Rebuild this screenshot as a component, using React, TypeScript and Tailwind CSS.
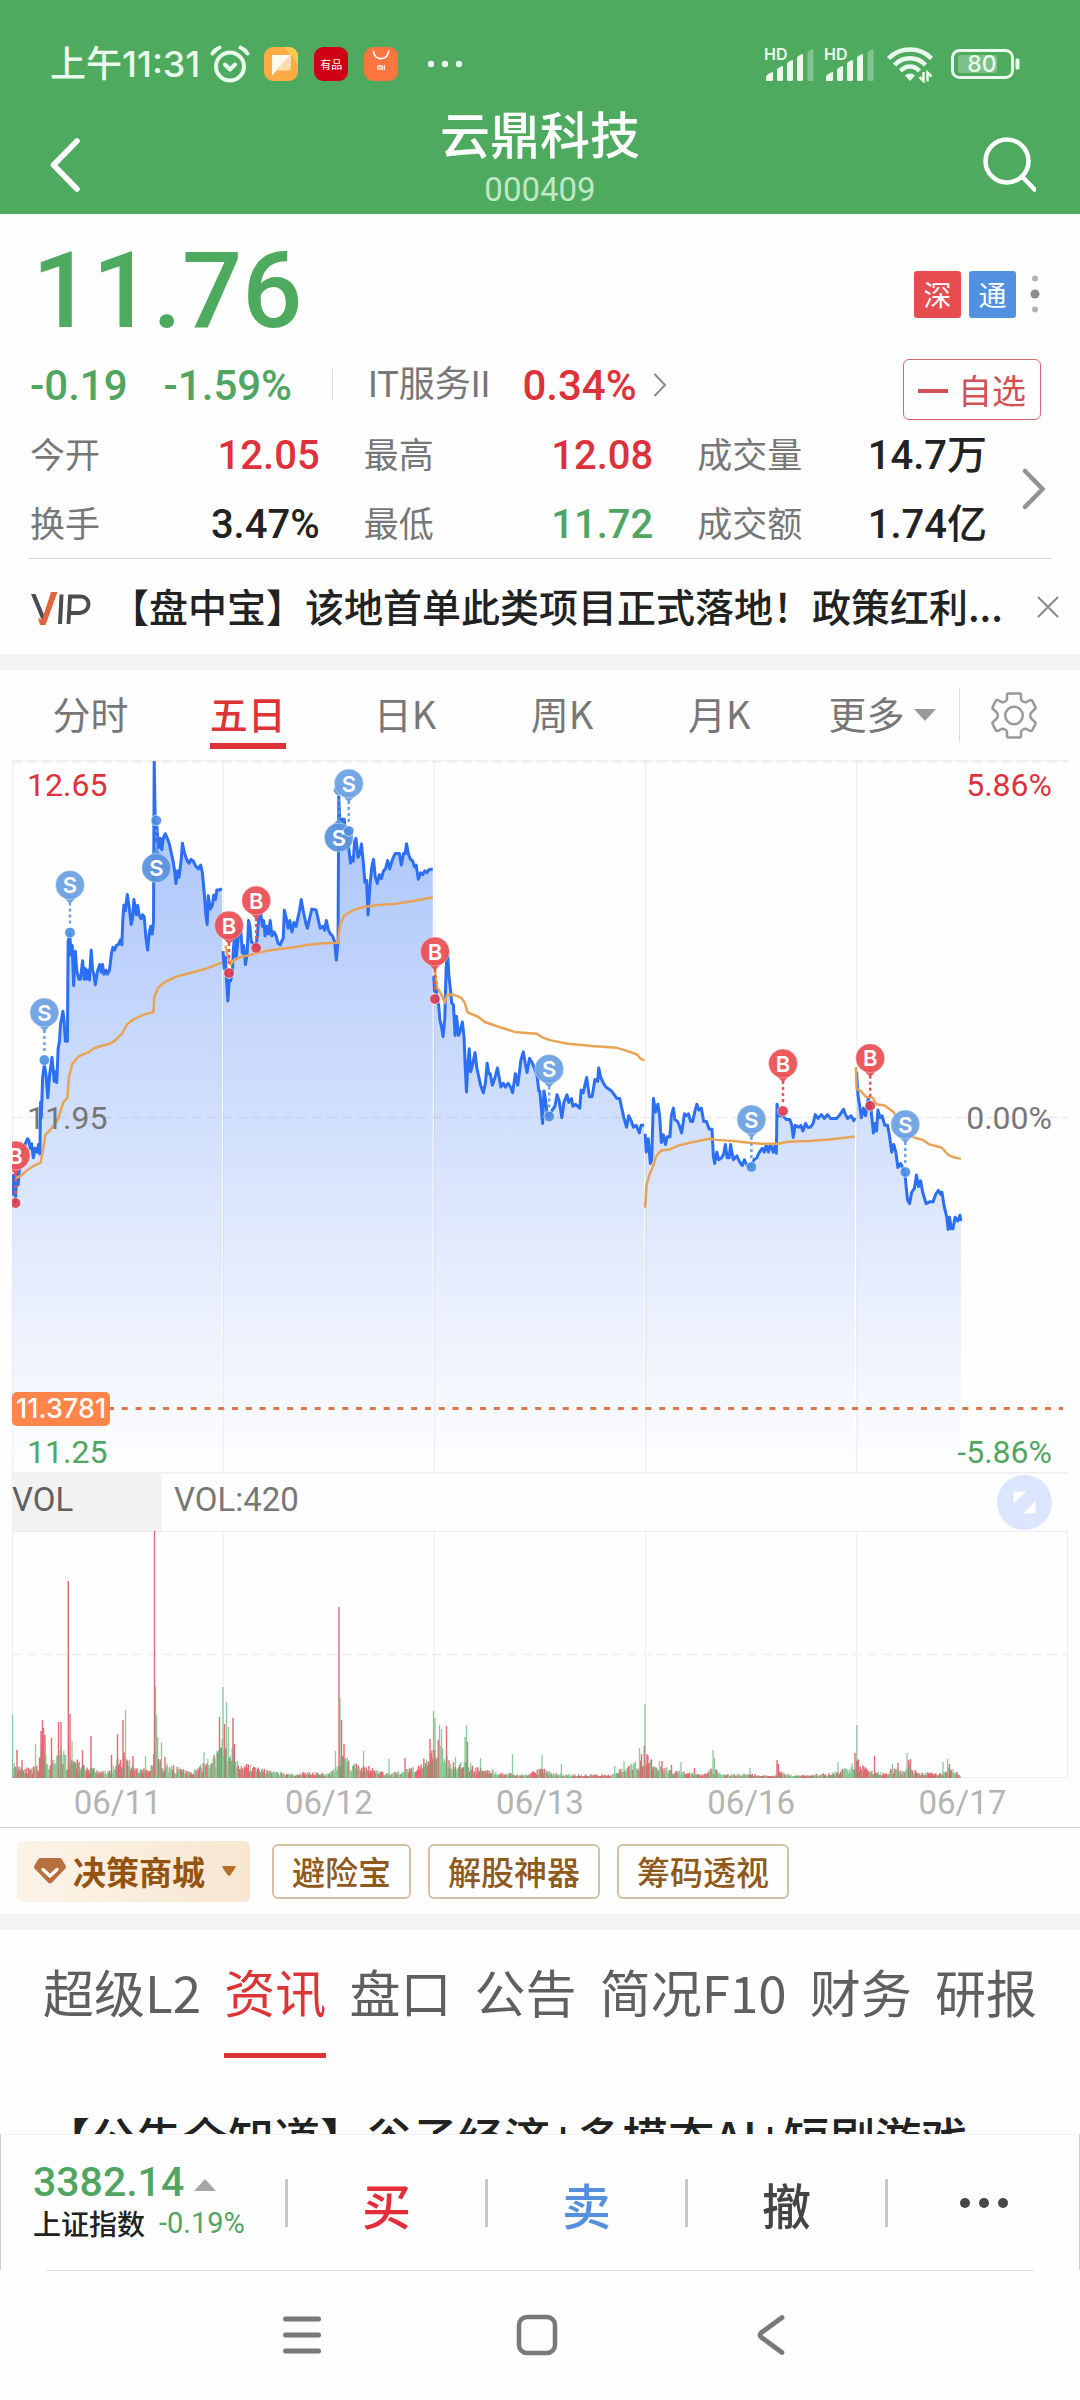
import { useId, useState } from 'react';
import clsx from 'clsx';

type Side = 'B' | 'S';

interface Pin {
  side: Side;
  x: number;
  y: number;
  below?: boolean;
}

interface Session {
  date: string;
  price: string;
  average: string;
}

const NUM = "font-['Roboto','Noto_Sans_CJK_SC',sans-serif]";

const CHART_W = 1056;
const PRICE_H = 713;
const VOLUME_H = 247;
const DAY_W = CHART_W / 5;

const PERIODS = ['分时', '五日', '日K', '周K', '月K'];
const SECTIONS = ['超级L2', '资讯', '盘口', '公告', '简况F10', '财务', '研报'];
const TOOLS = ['避险宝', '解股神器', '筹码透视'];

const STATS = [
  { label: '今开', value: '12.05', tone: 'text-[#dd323c]' },
  { label: '最高', value: '12.08', tone: 'text-[#dd323c]' },
  { label: '成交量', value: '14.7万', tone: 'text-[#222222]' },
  { label: '换手', value: '3.47%', tone: 'text-[#222222]' },
  { label: '最低', value: '11.72', tone: 'text-[#51a562]' },
  { label: '成交额', value: '1.74亿', tone: 'text-[#222222]' },
];

// Raw tick coordinates, mapped onto the chart by the plot group's transform
const SESSIONS: Session[] = [
  {
    date: '06/11',
    price:
      '36,1368 38,1420 42,1370 45,1440 49,1360 53,1395 56,1360 60,1330 68,1300 80,1275 84,1280 88,1300 92,1288 97,1325 102,1300 108,1310 112,1290 116,1315 118,1180 120,1220 124,1115 129,1080 134,1110 139,1168 144,1110 151,1062 154,1090 158,1125 161,1100 165,1128 169,1040 173,1020 176,975 183,942 186,965 190,1020 196,1020 198,760 203,740 206,795 210,770 214,875 219,785 223,835 229,858 234,858 240,810 245,858 248,830 252,858 256,835 260,860 265,782 269,835 273,845 277,873 284,835 290,820 294,840 298,820 302,845 308,835 312,845 318,835 324,790 328,775 333,782 338,770 344,768 350,755 354,768 357,700 360,665 364,680 370,637 376,675 381,715 385,700 389,650 396,690 400,665 404,690 410,700 414,690 419,695 424,750 429,782 434,735 438,720 442,740 446,710 448,290 452,500 456,460 460,515 465,490 470,520 474,490 480,478 486,490 492,505 498,530 503,550 508,580 511,608 516,575 520,592 526,550 530,503 535,525 540,540 545,550 549,555 555,545 562,550 568,562 576,570 583,560 588,580 594,640 598,690 602,715 605,640 611,675 617,665 621,638 626,650 630,625 636,625 645,622',
    average:
      '45,1378 60,1372 78,1358 100,1345 118,1338 124,1310 132,1265 150,1248 168,1225 184,1180 196,1168 200,1115 210,1080 228,1060 260,1048 270,1040 295,1032 320,1027 335,1018 355,1000 370,975 390,962 420,950 446,944 448,905 460,880 480,865 510,852 560,840 600,830 645,815',
  },
  {
    date: '06/12',
    price:
      '648,785 651,830 655,800 658,860 662,915 666,860 670,862 675,840 678,780 682,735 686,800 690,770 694,730 700,735 704,790 708,770 713,820 718,790 722,705 726,720 730,760 736,765 744,770 748,740 752,690 757,680 762,720 766,705 770,745 775,720 780,740 785,705 790,745 796,735 802,745 808,765 814,768 823,750 826,678 832,700 837,725 842,705 848,735 854,710 860,720 866,695 870,680 875,650 881,680 888,710 893,725 899,700 906,675 918,677 924,700 930,725 938,720 943,730 948,705 954,730 960,740 966,745 972,760 977,808 982,760 984,380 988,470 992,440 1000,440 1004,480 1010,490 1018,555 1022,540 1026,550 1030,500 1034,490 1040,540 1045,530 1050,505 1055,550 1060,605 1065,600 1069,690 1075,610 1080,565 1085,545 1090,590 1096,608 1102,585 1108,595 1114,575 1120,570 1126,548 1132,570 1140,545 1148,530 1154,530 1160,530 1166,560 1172,530 1177,530 1181,504 1186,530 1192,545 1198,548 1204,565 1209,560 1215,597 1222,580 1228,585 1234,575 1240,580 1246,572 1257,570',
    average:
      '655,770 662,800 670,820 680,808 700,800 740,792 780,783 830,777 860,774 890,769 940,764 982,763 988,715 1000,692 1025,678 1060,669 1100,664 1150,661 1200,654 1257,644',
  },
  {
    date: '06/13',
    price:
      '1260,850 1262,890 1265,860 1270,910 1274,925 1278,965 1283,985 1287,1008 1292,960 1296,830 1300,785 1304,850 1308,880 1312,920 1317,925 1322,1005 1326,955 1332,1005 1338,990 1343,970 1348,1010 1351,1080 1355,1153 1359,1080 1363,1040 1367,1100 1373,1080 1380,1050 1385,1090 1390,1110 1396,1135 1404,1155 1410,1130 1415,1078 1420,1105 1424,1105 1430,1135 1438,1115 1445,1090 1450,1115 1455,1140 1462,1130 1468,1140 1476,1130 1483,1140 1489,1155 1497,1105 1504,1135 1509,1100 1513,1070 1520,1048 1526,1080 1531,1102 1538,1065 1545,1075 1552,1090 1560,1110 1565,1150 1568,1150 1576,1235 1580,1150 1584,1170 1590,1215 1596,1216 1604,1200 1612,1190 1618,1160 1624,1175 1632,1220 1638,1180 1647,1160 1652,1180 1660,1170 1664,1190 1672,1185 1684,1195 1688,1148 1694,1155 1704,1115 1712,1165 1720,1165 1728,1120 1736,1125 1739,1090 1745,1115 1753,1130 1760,1140 1768,1145 1776,1150 1784,1160 1792,1170 1800,1170 1806,1195 1812,1220 1820,1245 1826,1215 1832,1225 1840,1245 1848,1240 1857,1260 1862,1240 1871,1240',
    average:
      '1263,835 1270,880 1283,900 1292,920 1298,900 1315,898 1340,907 1350,920 1358,945 1390,957 1408,970 1450,983 1500,997 1560,1001 1575,1010 1600,1018 1650,1027 1720,1033 1790,1037 1830,1048 1850,1055 1862,1067 1872,1070',
  },
  {
    date: '06/16',
    price:
      '1874,1262 1877,1310 1883,1275 1889,1340 1893,1330 1898,1170 1904,1205 1911,1185 1916,1215 1921,1285 1927,1265 1933,1290 1938,1270 1946,1270 1950,1215 1956,1195 1960,1225 1968,1230 1973,1240 1980,1260 1988,1210 1994,1215 2000,1210 2006,1230 2012,1230 2018,1205 2024,1185 2030,1200 2037,1195 2044,1230 2052,1230 2060,1250 2068,1250 2072,1320 2076,1340 2082,1310 2088,1330 2096,1325 2102,1315 2107,1290 2112,1325 2118,1325 2122,1290 2130,1330 2140,1320 2148,1335 2156,1345 2162,1330 2170,1345 2182,1348 2190,1330 2198,1325 2206,1310 2214,1300 2220,1310 2226,1290 2232,1310 2238,1290 2246,1310 2252,1290 2255,1313 2257,1185 2262,1215 2274,1215 2284,1225 2294,1225 2300,1240 2304,1272 2310,1240 2320,1245 2326,1240 2332,1255 2340,1235 2346,1245 2354,1245 2362,1235 2368,1212 2376,1222 2386,1212 2394,1222 2404,1212 2412,1222 2422,1222 2430,1222 2440,1212 2450,1198 2456,1212 2462,1222 2472,1215 2480,1228 2483,1220',
    average:
      '1874,1455 1878,1395 1888,1365 1898,1345 1905,1322 1920,1306 1945,1303 1970,1293 2010,1284 2060,1275 2080,1278 2130,1281 2170,1285 2210,1288 2260,1288 2290,1283 2350,1281 2410,1277 2483,1269',
  },
  {
    date: '06/17',
    price:
      '2488,1100 2492,1160 2498,1195 2502,1220 2508,1195 2514,1215 2522,1170 2530,1200 2537,1260 2542,1235 2546,1255 2550,1200 2556,1220 2562,1215 2570,1240 2578,1240 2584,1270 2590,1310 2596,1290 2602,1310 2608,1350 2616,1340 2628,1362 2632,1400 2636,1435 2642,1445 2648,1415 2656,1405 2662,1370 2668,1400 2674,1385 2680,1415 2690,1445 2700,1440 2710,1440 2718,1420 2726,1410 2732,1420 2736,1415 2742,1450 2750,1480 2754,1512 2758,1480 2763,1510 2768,1510 2774,1480 2782,1490 2788,1475 2791,1490',
    average:
      '2486,1088 2488,1145 2500,1150 2515,1165 2535,1168 2545,1185 2570,1188 2595,1205 2610,1225 2640,1258 2655,1272 2680,1278 2700,1290 2735,1298 2755,1318 2775,1325 2791,1327',
  },
];

const PINS: Pin[] = [
  { side: 'B', x: 3.5, y: 442 },
  { side: 'S', x: 32.4, y: 299 },
  { side: 'S', x: 58, y: 171.5 },
  { side: 'S', x: 144.3, y: 59.5, below: true },
  { side: 'B', x: 217, y: 212 },
  { side: 'B', x: 244.2, y: 187 },
  { side: 'S', x: 326.8, y: 29, below: true },
  { side: 'S', x: 336.8, y: 70 },
  { side: 'B', x: 422.9, y: 238 },
  { side: 'S', x: 537.2, y: 355.4 },
  { side: 'S', x: 739.4, y: 406 },
  { side: 'B', x: 771, y: 350 },
  { side: 'B', x: 858.2, y: 344.7 },
  { side: 'S', x: 893.3, y: 411 },
];

// [x, height] outline of the ordinary turnover
const VOLUME_ENVELOPE: [number, number][] = [
  [0, 18], [8, 16], [18, 10], [26, 14], [30, 36], [38, 18], [44, 22], [50, 36], [56, 20], [62, 26], [70, 16],
  [90, 8], [97, 8], [105, 20], [114, 30], [120, 16], [128, 12], [138, 10], [143, 40], [150, 18], [165, 12],
  [180, 7], [195, 20], [204, 28], [211, 46], [218, 36], [226, 20], [240, 14], [260, 8], [285, 4], [295, 8],
  [315, 5], [325, 15], [332, 30], [340, 18], [360, 12], [375, 5], [390, 8], [408, 18], [416, 30], [424, 44],
  [434, 28], [445, 14], [455, 22], [462, 12], [475, 12], [490, 6], [515, 4], [530, 12], [540, 6], [560, 4],
  [600, 4], [612, 14], [625, 18], [633, 28], [645, 14], [660, 10], [690, 4], [701, 12], [710, 4], [740, 5],
  [760, 2], [768, 8], [780, 3], [800, 4], [820, 6], [835, 12], [846, 20], [855, 10], [870, 6], [885, 12],
  [890, 8], [897, 20], [905, 6], [930, 6], [937, 12], [949, 4],
];

// [x, height, up]
const VOLUME_SPIKES: [number, number, 0 | 1][] = [
  [0.5, 63, 0], [5, 28, 1], [10, 18, 1], [23.5, 34, 0], [29, 47, 1], [30.5, 58, 1], [31.5, 50, 1], [33, 43, 1],
  [39.5, 40, 1], [46.5, 56, 1], [49, 56, 1], [56.3, 197, 1], [58, 64, 1], [60, 37, 0], [70.5, 28, 1],
  [79, 42, 1], [99.5, 23, 1], [105.5, 44, 1], [111, 58, 1], [113.5, 68, 0], [121, 22, 1], [133.5, 22, 0],
  [142.5, 247, 1], [143.5, 92, 0], [144.5, 63, 0], [145.7, 41, 0], [149.5, 36, 0], [153, 21, 1], [192, 26, 0],
  [207.5, 61, 1], [211, 91, 0], [212.5, 54, 1], [214.5, 76, 0], [216.5, 51, 0], [221, 60, 1], [222.5, 34, 1],
  [323.5, 27, 0], [327, 171, 1], [328, 80, 0], [329.5, 58, 1], [332, 34, 1], [351.5, 27, 0], [377, 19, 0],
  [393, 20, 1], [418, 39, 1], [421.5, 67, 0], [423, 60, 0], [427.5, 53, 0], [429.5, 49, 0], [434.5, 52, 1],
  [443.5, 21, 0], [453, 41, 0], [454.5, 53, 0], [455.5, 36, 1], [468.5, 20, 0], [500.5, 24, 0], [530, 23, 0],
  [549.4, 14, 0], [602.7, 12, 0], [612, 17, 0], [627.5, 30, 0], [629.5, 24, 1], [632.3, 32, 1], [633, 74, 0],
  [635, 22, 1], [647.5, 17, 0], [650, 17, 1], [659.5, 13, 1], [669, 16, 0], [682.5, 10, 1], [701, 28, 0],
  [702.5, 20, 0], [738, 10, 0], [765, 18, 1], [766.5, 14, 1], [826, 16, 0], [843, 25, 1], [844.8, 53, 0],
  [846, 18, 1], [862.5, 22, 1], [880.5, 14, 0], [886, 15, 1], [895, 25, 0], [896.5, 18, 1], [898.5, 19, 1],
  [931, 16, 0], [935.5, 19, 0], [937.5, 14, 1],
];

function buildVolume() {
  const bars = { up: '', down: '' };
  const add = (x: number, h: number, up: boolean) => {
    bars[up ? 'up' : 'down'] += `M${x.toFixed(1)} ${VOLUME_H}v-${h.toFixed(1)}`;
  };

  let seed = 11;
  const rand = () => {
    seed = (seed * 16807) % 2147483647;
    return seed / 2147483647;
  };

  let i = 0;
  for (let x = 0.5; x < 949; x += 0.9) {
    while (i < VOLUME_ENVELOPE.length - 2 && VOLUME_ENVELOPE[i + 1][0] < x) i++;
    const [x0, h0] = VOLUME_ENVELOPE[i];
    const [x1, h1] = VOLUME_ENVELOPE[i + 1];
    const top = h0 + ((h1 - h0) * (x - x0)) / (x1 - x0);
    const trend = Math.sin(x / 9) * 0.25;
    add(x, Math.max(2, top * (0.35 + rand() * 0.6)), rand() + trend > 0.5);
  }
  VOLUME_SPIKES.forEach(([x, h, up]) => add(x, h, up === 1));
  return bars;
}

const VOLUME = buildVolume();

function areaPath(points: string) {
  const pairs = points.split(' ');
  const first = pairs[0].split(',')[0];
  const last = pairs[pairs.length - 1].split(',')[0];
  return `M${first},2151 L${points} L${last},2151 Z`;
}

function SignalIcon() {
  return (
    <div className="relative h-9 w-[51px]">
      <span className="absolute top-0 left-0 font-['Inter',sans-serif] text-[16px] leading-[16px] font-semibold">HD</span>
      <svg viewBox="0 0 51 36" className="h-9 w-[51px]" fill="currentColor" aria-hidden="true">
        <path d="M2 34.500V30.500Q3.500 27 9 26V33.500Q9 35 7.500 35H3Q2 35 2 34.500Z" />
        <path d="M13 23.500Q14.500 21 19 20V33.500Q19 35 17.500 35H14.500Q13 35 13 33.500Z" />
        <path d="M23 17.500Q24.500 15 29 14V33.500Q29 35 27.500 35H24.500Q23 35 23 33.500Z" />
        <path d="M33 11.500Q34.500 9 39 8V33.500Q39 35 37.500 35H34.500Q33 35 33 33.500Z" />
        <path opacity="0.35" d="M43.500 6.500Q45 4 49.500 3V33.500Q49.500 35 48 35H45Q43.500 35 43.500 33.500Z" />
      </svg>
    </div>
  );
}

function StatusBar() {
  return (
    <div className="flex h-10 items-center justify-between pr-[59px] pl-[50px] text-[#e9faec]">
      <div className="flex items-center">
        <span className="font-['Inter','Noto_Sans_CJK_SC',sans-serif] text-[36px] leading-10 font-medium">上午11:31</span>
        <svg viewBox="0 0 40 38" className="ml-2.5 h-[38px] w-10" fill="none" stroke="currentColor" strokeWidth="4" strokeLinecap="round" strokeLinejoin="round" aria-hidden="true">
          <circle cx="20" cy="21.500" r="14" />
          <path d="M2.500 8.500Q5 4.500 9.500 2.500M37.500 8.500Q35 4.500 30.500 2.500M15 19.500l5 5 5-5" />
        </svg>
        <svg viewBox="0 0 34 34" className="ml-3.5 size-[34px]" aria-hidden="true">
          <rect width="34" height="34" rx="9" fill="#ffab45" />
          <path d="M20 0h5a9 9 0 0 1 9 9v8z" fill="#fbc850" />
          <path d="M27 8v12.500q0 3-3 3H13L27 8.500z" fill="#ffdcae" />
          <path d="M8 8h19L8 28.500z" fill="#fff8ec" />
        </svg>
        <span className="ml-4 flex size-[34px] items-center justify-center rounded-[9px] bg-[#cf0014] text-[11px] leading-none text-white">有品</span>
        <svg viewBox="0 0 34 34" className="ml-4 size-[34px]" aria-hidden="true">
          <rect width="34" height="34" rx="9" fill="#ff7540" />
          <path d="M9.500 4.500c1 9.500 14 9.500 15 0" fill="none" stroke="#fff" strokeWidth="1.800" strokeLinecap="round" />
          <path d="M14 23v-4.200h3.200q1 0 1 1V23M16 20.500V23M20.300 18.300V23" fill="none" stroke="#fff" strokeWidth="1.200" />
        </svg>
        <svg viewBox="0 0 36 8" className="ml-[29px] h-2 w-9" fill="currentColor" aria-hidden="true">
          <circle cx="4" cy="4" r="3.200" />
          <circle cx="18" cy="4" r="3.200" />
          <circle cx="32" cy="4" r="3.200" />
        </svg>
      </div>
      <div className="flex items-center gap-[9px]">
        <SignalIcon />
        <SignalIcon />
        <svg viewBox="0 0 48 38" className="ml-0.5 h-[38px] w-12" fill="none" stroke="currentColor" strokeWidth="4.500" aria-hidden="true">
          <path d="M2.500 13.500C14 1.500 34 1.500 45.500 13.500M8.500 20C17 11 31 11 39.500 20M14.500 26C20 20 28 20 33.500 26" />
          <path d="M24 36l-5-5.500q5-4 10 0z" fill="currentColor" stroke="none" />
          <path d="M37.500 27v9l-4-4M41.500 36.500v-9l4 4" strokeWidth="2.500" />
        </svg>
        <svg viewBox="0 0 70 30" className="ml-2 h-[30px] w-[70px]" fill="none" aria-hidden="true">
          <rect x="1.500" y="1.500" width="60" height="27" rx="7" stroke="currentColor" strokeWidth="3" />
          <rect x="7" y="6" width="39" height="18" rx="3" fill="currentColor" opacity="0.3" />
          <rect x="64.500" y="9.500" width="4" height="11" rx="1.500" fill="currentColor" />
          <text x="31" y="23" textAnchor="middle" fill="currentColor" className="font-['Inter',sans-serif] text-[23px] font-medium">80</text>
        </svg>
      </div>
    </div>
  );
}

function Header() {
  return (
    <header className="bg-[#4eaa5e] pt-11 text-white">
      <StatusBar />
      <div className="flex items-end justify-between px-11 pt-5 pb-1.5">
        <button aria-label="返回" className="flex h-[86px] w-[54px] items-center pl-1.5">
          <svg viewBox="0 0 30 54" className="h-[54px] w-[30px]" fill="none" stroke="currentColor" strokeWidth="5.500" strokeLinecap="round" strokeLinejoin="round">
            <path d="M27 3L3.500 27 27 51" />
          </svg>
        </button>
        <div className="text-center">
          <h1 className="text-[50px] leading-14 font-medium">云鼎科技</h1>
          <p className={clsx(NUM, 'mt-3 text-[33px] leading-9 text-[#bfe8c5]')}>000409</p>
        </div>
        <button aria-label="搜索" className="flex h-[86px] w-[54px] items-center">
          <svg viewBox="0 0 54 56" className="h-14 w-[54px]" fill="none" stroke="currentColor" strokeWidth="4.500" strokeLinecap="round">
            <circle cx="25" cy="24" r="21.500" />
            <path d="M40 39.500L52.500 52.500" />
          </svg>
        </button>
      </div>
    </header>
  );
}

function Quote() {
  return (
    <section className="pt-6">
      <div className="flex items-center justify-between pr-10 pl-8">
        <p className={clsx(NUM, 'text-[106px] leading-none font-medium text-[#4eaa5e]')}>11.76</p>
        <div className="mt-1.5 flex items-center gap-2 text-[28px] leading-none text-white">
          <span className="flex size-[47px] items-center justify-center rounded-[3px] bg-[#e64c50]">深</span>
          <span className="flex size-[47px] items-center justify-center rounded-[3px] bg-[#5290e0]">通</span>
          <svg viewBox="0 0 10 38" className="ml-1.5 h-[38px] w-2.5" aria-hidden="true">
            <circle cx="5" cy="3.500" r="3" fill="#b3b3b3" />
            <circle cx="5" cy="19" r="4.500" fill="#8c8c8c" />
            <circle cx="5" cy="34.500" r="3" fill="#b3b3b3" />
          </svg>
        </div>
      </div>

      <div className="mt-[15px] flex items-start justify-between pr-[39px] pl-[30px]">
        <div className={clsx(NUM, 'flex h-[52px] items-center text-[42px] font-medium')}>
          <span className="text-[#51a562]">-0.19</span>
          <span className="ml-9 text-[#51a562]">-1.59%</span>
          <span className="ml-10 h-8 w-px bg-[#dddddd]" />
          <a href="#sector" className="ml-[35px] flex items-center text-[#dd323c]">
            <span className="text-[36px] font-normal text-[#777777]">IT服务II</span>
            <span className="ml-8">0.34%</span>
            <svg viewBox="0 0 14 24" className="ml-4 h-6 w-3.5" fill="none" stroke="#8a8a8a" strokeWidth="2">
              <path d="M1.500 1L12 12 1.500 23" />
            </svg>
          </a>
        </div>
        <button className="flex h-[61px] items-center gap-2.5 rounded-[6px] border border-[#d4686b] px-3.5 text-[34px] leading-none text-[#d25156]">
          <span className="mt-0.5 h-1 w-[30px] bg-current" />
          自选
        </button>
      </div>

      <div className="flex">
        <dl className="grid flex-1 grid-cols-3 gap-x-11 pl-[30px]">
          {STATS.map((stat) => (
            <div key={stat.label} className="flex h-[69px] items-center justify-between">
              <dt className="pb-1 text-[35px] leading-none text-[#777777]">{stat.label}</dt>
              <dd className={clsx(NUM, 'pt-0.5 text-[40px] leading-none font-medium', stat.tone)}>{stat.value}</dd>
            </div>
          ))}
        </dl>
        <button aria-label="更多行情" className="flex w-[93px] items-center justify-center">
          <svg viewBox="0 0 24 42" className="h-[42px] w-6" fill="none" stroke="#929292" strokeWidth="4.500" strokeLinecap="round">
            <path d="M3 3L20.500 21 3 39" />
          </svg>
        </button>
      </div>
      <div className="mx-7 h-px bg-[#d9d9d9]" />
    </section>
  );
}

function VipBanner() {
  return (
    <div className="flex h-[95px] items-center pr-[21px] pl-[30px]">
      <svg viewBox="0 0 62 34" className="mt-1 h-[34px] w-[62px] shrink-0" fill="none" role="img" aria-label="VIP">
        <path d="M1 2h4.500l9 22-2 6z" fill="#4c4c4c" />
        <path d="M21 0h6.500L15.500 33H10L8 26l4 2z" fill="#e2643c" />
        <path d="M31.500 2.500L30 32" stroke="#4c4c4c" strokeWidth="4" />
        <path d="M38.500 32L40 4.500h10c5 0 8.500 2.500 8.500 7.500S54.500 21 49 21h-9.500" stroke="#4c4c4c" strokeWidth="3.800" />
      </svg>
      <a href="#news" className="ml-[18px] min-w-0 flex-1 truncate pb-1 text-[39px] leading-14 font-medium text-[#222222]">
        【盘中宝】该地首单此类项目正式落地！政策红利...
      </a>
      <button aria-label="关闭" className="shrink-0">
        <svg viewBox="0 0 22 22" className="size-[22px]" stroke="#8a8a8a" strokeWidth="2">
          <path d="M1 1l20 20M21 1L1 21" />
        </svg>
      </button>
    </div>
  );
}

function PeriodTabs() {
  const [active, setActive] = useState('五日');

  return (
    <nav className="flex h-[90px] items-center px-3 text-[38px] leading-none text-[#777777]">
      {PERIODS.map((period) => (
        <button
          key={period}
          onClick={() => setActive(period)}
          className={clsx('flex h-full flex-1 items-center justify-center', period === active && 'font-medium text-[#df3437]')}
        >
          <span className="relative flex h-full items-center pb-1">
            {period}
            {period === active && <span className="absolute inset-x-0 bottom-[11px] h-1.5 bg-[#df3437]" />}
          </span>
        </button>
      ))}
      <button className="flex h-full flex-1 items-center justify-center">
        <span className="flex items-center gap-2.5 pb-1 pl-3">
          更多
          <svg viewBox="0 0 22 12" className="mt-1 h-3 w-5.5" fill="#9a9a9a">
            <path d="M0 0h22L11 12z" />
          </svg>
        </span>
      </button>
      <span className="ml-1 h-[54px] w-px bg-[#dddddd]" />
      <button aria-label="设置" className="flex h-full w-[108px] items-center justify-center">
        <svg viewBox="0 0 46 47" className="h-[47px] w-[46px]" fill="none" stroke="#999999" strokeWidth="2.500" strokeLinejoin="round">
          <path d="M17.500 1.500h11q1.500 0 1.500 1.500v4q0 1.500 2 2.500 2 1.200 3.500.5l3.500-1.800q1.500-.7 2.300.7l3 6q.7 1.300-.5 2.300l-3 2.800q-1.600 1.300-1.600 3.500t1.600 3.500l3 2.800q1.200 1 .5 2.300l-3 6q-.8 1.400-2.300.7L35.500 37q-1.500-.7-3.500.5-2 1-2 2.500v4q0 1.500-1.500 1.500h-11q-1.500 0-1.500-1.500v-4q0-1.500-2-2.500-2-1.200-3.500-.5L7 38.800q-1.500.7-2.300-.7l-3-6q-.7-1.300.5-2.300l3-2.800q1.600-1.300 1.600-3.500T5.200 20l-3-2.800q-1.200-1-.5-2.300l3-6q.8-1.400 2.300-.7l3.500 1.800q1.500.7 3.500-.5 2-1 2-2.500V3q0-1.500 1.500-1.500z" />
          <circle cx="23" cy="23.500" r="8.800" />
        </svg>
      </button>
    </nav>
  );
}

function TradePin({ side, x, y, below }: Pin) {
  const flip = below ? -1 : 1;
  const head = below ? '#5b93dd' : '#6fa2e4';
  const fill = side === 'B' ? '#ea5256' : head;
  const dot = side === 'B' ? '#dc3b4f' : '#4c8de0';

  return (
    <g transform={`translate(${x} ${y})`}>
      <path d={`M0 ${-30 * flip}V${-6 * flip}`} stroke={fill} strokeWidth="2.500" strokeDasharray="3 3" />
      <circle r="5.300" fill={dot} fillOpacity="0.9" stroke="#fff" strokeOpacity="0.6" />
      <path d={`M-8 ${-37 * flip}L0 ${-28.5 * flip}L8 ${-37 * flip}Z`} fill={fill} />
      <circle cy={-47.5 * flip} r="14.500" fill={fill} fillOpacity="0.95" stroke="#fff" strokeOpacity="0.4" />
      <text y={-47.5 * flip + 8} textAnchor="middle" fill="#fff" className="font-['Inter',sans-serif] text-[22px] font-semibold">
        {side}
      </text>
    </g>
  );
}

function GridColumns({ height }: { height: number }) {
  return (
    <g stroke="#888" strokeOpacity="0.1" strokeWidth="1.500">
      {[1, 2, 3, 4].map((day) => (
        <path key={day} d={`M${day * DAY_W} 0V${height}`} />
      ))}
    </g>
  );
}

function PriceChart() {
  const gradient = useId();

  return (
    <div className={clsx(NUM, 'relative border-t border-[#eeeeee] text-[32px] leading-8')}>
      <svg viewBox={`0 0 ${CHART_W} ${PRICE_H}`} className="block w-full" role="img" aria-label="五日走势">
        <defs>
          <linearGradient id={gradient} gradientUnits="userSpaceOnUse" x1="0" y1="288" x2="0" y2="2151">
            <stop offset="0" stopColor="#2b6cf6" stopOpacity="0.42" />
            <stop offset="1" stopColor="#2b6cf6" stopOpacity="0" />
          </linearGradient>
        </defs>
        <g transform="scale(0.3443 0.3827) translate(-35 -288)" fill="none" strokeLinejoin="round">
          {SESSIONS.map((session) => (
            <g key={session.date}>
              <path d={areaPath(session.price)} fill={`url(#${gradient})`} />
              <polyline points={session.price} stroke="#2c6ff2" strokeWidth="3" vectorEffect="non-scaling-stroke" />
              <polyline points={session.average} stroke="#e9a355" strokeWidth="2.500" vectorEffect="non-scaling-stroke" />
            </g>
          ))}
        </g>
        <GridColumns height={PRICE_H} />
        <path d={`M0 1H${CHART_W}M0 ${PRICE_H / 2}H${CHART_W}`} stroke="#888" strokeOpacity="0.15" strokeWidth="1.500" strokeDasharray="10 5" />
        <path d={`M0 ${PRICE_H - 1}H${CHART_W}`} stroke="#ececec" strokeWidth="1.500" />
        <path d="M0.500 0V713" stroke="#888" strokeOpacity="0.12" />
        <path d="M96 647.500H1051" stroke="#de7645" strokeWidth="3" strokeDasharray="6 7.780" />
        {PINS.map((pin) => (
          <TradePin key={`${pin.x}-${pin.y}`} {...pin} />
        ))}
      </svg>
      <span className="absolute top-2 left-[15px] text-[#dd323c]">12.65</span>
      <span className="absolute top-2 right-4 text-[#dd323c]">5.86%</span>
      <span className="absolute top-1/2 left-[15px] -translate-y-1/2 text-[#777777]">11.95</span>
      <span className="absolute top-1/2 right-4 -translate-y-1/2 text-[#777777]">0.00%</span>
      <span className="absolute bottom-1.5 left-[15px] text-[#51a562]">11.25</span>
      <span className="absolute right-4 bottom-1.5 text-[#51a562]">-5.86%</span>
      <span className="absolute bottom-12 left-0 rounded-[5px] bg-[#ff854a] px-1 font-['Inter',sans-serif] text-[27px] leading-[34px] font-medium text-white">
        11.3781
      </span>
    </div>
  );
}

function VolumeChart() {
  return (
    <div className={clsx(NUM, 'text-[33px] leading-none')}>
      <div className="flex h-[57px] items-stretch text-[#777777]">
        <button className="w-[150px] bg-[#f2f2f2] pb-1.5 text-left text-[#606060]">VOL</button>
        <span className="flex flex-1 items-center pb-1.5 pl-3">VOL:420</span>
        <button aria-label="全屏" className="mr-4">
          <svg viewBox="0 0 55 55" className="size-[55px]">
            <circle cx="27.500" cy="27.500" r="27.500" fill="#dbe5fd" />
            <path d="M16.500 16.500h12.500l-12.500 12.500zM38.500 38.500H26l12.500-12.500z" fill="#fff" />
          </svg>
        </button>
      </div>
      <svg viewBox={`0 0 ${CHART_W} ${VOLUME_H}`} className="block w-full" role="img" aria-label="成交量">
        <GridColumns height={VOLUME_H} />
        <path d={`M0 ${VOLUME_H / 2}H${CHART_W}`} stroke="#eeeeee" strokeWidth="1.500" strokeDasharray="10 5" />
        <rect x="0.500" y="0.500" width={CHART_W - 1} height={VOLUME_H - 1} fill="none" stroke="#ececec" />
        <path d={VOLUME.up} stroke="#df4453" strokeWidth="1.400" strokeOpacity="0.8" />
        <path d={VOLUME.down} stroke="#5db370" strokeWidth="1.300" strokeOpacity="0.7" />
      </svg>
      <div className="flex h-[49px] items-center text-[#b4b4b4]">
        {SESSIONS.map((session) => (
          <span key={session.date} className="flex-1 text-center">
            {session.date}
          </span>
        ))}
      </div>
    </div>
  );
}

function ToolRow() {
  return (
    <div className="flex h-[87px] items-center border-t border-[#cccccc] pl-[17px] text-[33px] leading-none text-[#8f5a1c]">
      <button className="flex h-[61px] items-center rounded-[6px] bg-linear-to-r from-[#fcf3e8] to-[#f7e7d1] pr-3.5 pl-4 font-bold text-[#955310]">
        <svg viewBox="0 0 34 28" className="h-7 w-[34px]" aria-hidden="true">
          <path d="M7.500 1h19q1.500 0 2.300 1.200l3.800 6.300q1 1.700-.4 3.200L19 25.500q-2 2-4 0L1.800 11.700Q.4 10.200 1.400 8.500l3.800-6.300Q6 1 7.500 1z" fill="#b8703f" />
          <path d="M10 12.500l7 6.500 7-6.500" fill="none" stroke="#fff" strokeWidth="3.200" strokeLinecap="round" strokeLinejoin="round" />
        </svg>
        <span className="ml-1.5">决策商城</span>
        <svg viewBox="0 0 14 10" className="ml-[17px] h-2.5 w-3.5" fill="#b5702f" aria-hidden="true">
          <path d="M1 0h12q1 .5.500 1.500L8.500 9q-1.500 1.500-3 0L.5 1.500Q0 .5 1 0z" />
        </svg>
      </button>
      <div className="ml-[22px] flex gap-[17px]">
        {TOOLS.map((tool) => (
          <button key={tool} className="h-[55px] rounded-[6px] border-2 border-[#d4c0a5] px-[18px] font-medium">
            {tool}
          </button>
        ))}
      </div>
    </div>
  );
}

function NewsSection() {
  const [active, setActive] = useState('资讯');

  return (
    <section>
      <nav className="flex justify-between px-[43px] text-[51px] leading-none text-[#5f5f5f]">
        {SECTIONS.map((section) => (
          <button
            key={section}
            onClick={() => setActive(section)}
            className={clsx('h-32 border-b-[5px]', section === active ? 'border-[#dc3538] text-[#dc3538]' : 'border-transparent')}
          >
            {section}
          </button>
        ))}
      </nav>
      <article className="mt-12 px-11">
        <h2 className="truncate text-[46px] leading-15 font-medium text-[#222222]">【公告全知道】谷子经济+多模态AI+短剧游戏</h2>
      </article>
    </section>
  );
}

function TradeBar() {
  return (
    <div className="grid grid-cols-[284px_repeat(3,1fr)_194px] items-center border-x border-t border-x-[#cccccc] border-t-[#f3f3f3] text-[49px] leading-none font-medium">
      <a href="#index" className="flex h-[135px] flex-col justify-center pl-8">
        <span className={clsx(NUM, 'flex items-center gap-2.5 text-[41px] leading-[42px] text-[#51a562]')}>
          3382.14
          <svg viewBox="0 0 22 12" className="mt-1.5 h-3 w-5.5" fill="#a6a6a6">
            <path d="M0 12L11 0l11 12z" />
          </svg>
        </span>
        <span className="flex items-center gap-3.5 pb-0.5 text-[28px] leading-10 text-[#222222]">
          上证指数
          <span className={clsx(NUM, 'text-[29px] font-normal text-[#51a562]')}>-0.19%</span>
        </span>
      </a>
      <button className="h-12 border-l-[3px] border-[#c8c8c8] pb-1.5 text-[#e52c38]">买</button>
      <button className="h-12 border-l-[3px] border-[#c8c8c8] pb-1.5 text-[#568fdc]">卖</button>
      <button className="h-12 border-l-[3px] border-[#c8c8c8] pb-1.5 text-[#444444]">撤</button>
      <button aria-label="更多" className="flex h-12 items-center justify-center border-l-[3px] border-[#c8c8c8]">
        <svg viewBox="0 0 50 12" className="h-3 w-[50px]" fill="#484848">
          <circle cx="6" cy="6" r="5" />
          <circle cx="25" cy="6" r="5" />
          <circle cx="44" cy="6" r="5" />
        </svg>
      </button>
    </div>
  );
}

function SystemNav() {
  return (
    <div className="flex h-[129px] items-center justify-center gap-[194px] pr-[7px] pb-0.5 text-[#797979]">
      <button aria-label="最近任务">
        <svg viewBox="0 0 40 42" className="h-[42px] w-10" fill="none" stroke="currentColor" strokeWidth="5" strokeLinecap="round">
          <path d="M3.500 5h33M3.500 21h33M3.500 37h33" />
        </svg>
      </button>
      <button aria-label="主屏幕">
        <svg viewBox="0 0 42 42" className="size-[42px]" fill="none" stroke="currentColor" strokeWidth="4.500">
          <rect x="3" y="3" width="36" height="36" rx="8" />
        </svg>
      </button>
      <button aria-label="返回上一页">
        <svg viewBox="0 0 40 42" className="h-[42px] w-10" fill="none" stroke="currentColor" strokeWidth="4.800" strokeLinecap="round">
          <path d="M30 3.500L9.500 18.500q-3 2.500 0 5L30 38.500" />
        </svg>
      </button>
    </div>
  );
}

export default function App() {
  return (
    <div className="flex h-screen flex-col bg-[#fefefe] font-['Noto_Sans_CJK_SC',sans-serif] text-[#222222]">
      <Header />
      <main className="min-h-0 flex-1 overflow-hidden">
        <Quote />
        <VipBanner />
        <div className="h-4 bg-[#f4f4f4]" />
        <PeriodTabs />
        <div className="px-3">
          <PriceChart />
          <VolumeChart />
        </div>
        <ToolRow />
        <div className="h-4 bg-[#f4f4f4]" />
        <NewsSection />
      </main>
      <footer>
        <TradeBar />
        <div className="mx-[46px] h-px bg-[#e2e2e2]" />
        <SystemNav />
      </footer>
    </div>
  );
}
